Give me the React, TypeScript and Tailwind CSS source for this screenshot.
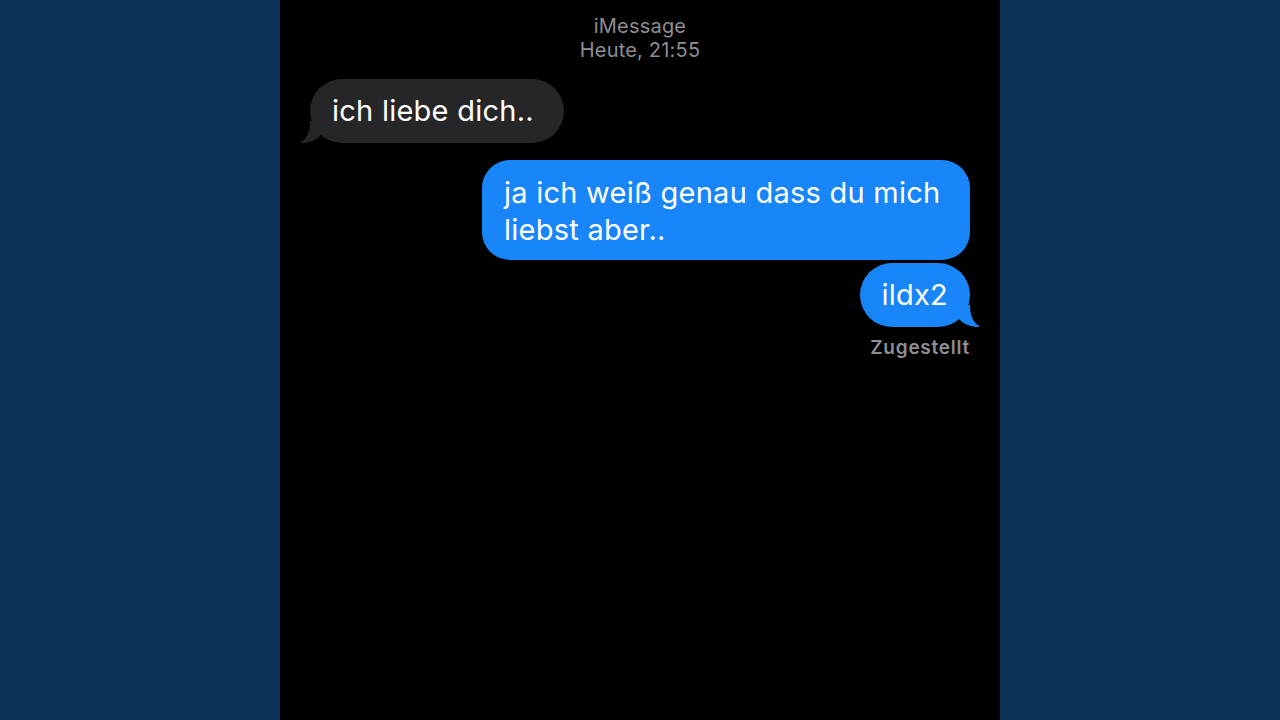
import React from "react";

const Tail = ({ color, side }: { color: string; side: "left" | "right" }) => (
  <svg
    width="30"
    height="22"
    viewBox="0 0 30 22"
    className={
      side === "left"
        ? "absolute -left-[10px] bottom-0"
        : "absolute -right-[10px] bottom-0 scale-x-[-1]"
    }
  >
    <path d="M10 0 C10 11 7 17 0 22 C8 22 14 20 19 16 L26 8 L22 0 Z" fill={color} />
  </svg>
);

export default function App() {
  return (
    <div className="min-h-screen w-full bg-[#0c3257] flex justify-center">
      <div
        className="w-[720px] h-[720px] bg-black flex flex-col px-[30px] pt-[14px]"
        style={{ fontFamily: "Inter, 'Liberation Sans', sans-serif" }}
      >
        <div className="flex flex-col items-center text-[#8e8e93] text-[20px] leading-[24px] tracking-[0.2px]">
          <span>iMessage</span>
          <span>Heute, 21:55</span>
        </div>

        <div className="mt-[17px] flex">
          <div className="relative bg-[#262628] text-white rounded-[32px] h-[64px] pl-[22px] pr-[30px] flex items-center text-[29px] tracking-[0.25px]">
            <Tail color="#262628" side="left" />
            <span className="relative">ich liebe dich..</span>
          </div>
        </div>

        <div className="mt-[17px] flex flex-col items-end">
          <div className="bg-[#1885f8] text-white rounded-[28px] w-[488px] px-[22px] pt-[14px] pb-[12px] text-[29px] leading-[37px] tracking-[0.25px]">
            ja ich weiß genau dass du mich liebst aber..
          </div>
          <div className="relative mt-[3px] bg-[#1885f8] text-white rounded-[32px] h-[64px] pl-[21px] pr-[22px] flex items-center text-[29px] tracking-[0.25px]">
            <Tail color="#1885f8" side="right" />
            <span className="relative">ildx2</span>
          </div>
          <span className="mt-[10px] text-[#8e8e93] text-[19px] font-semibold leading-[22px] tracking-[0.75px]">
            Zugestellt
          </span>
        </div>
      </div>
    </div>
  );
}
